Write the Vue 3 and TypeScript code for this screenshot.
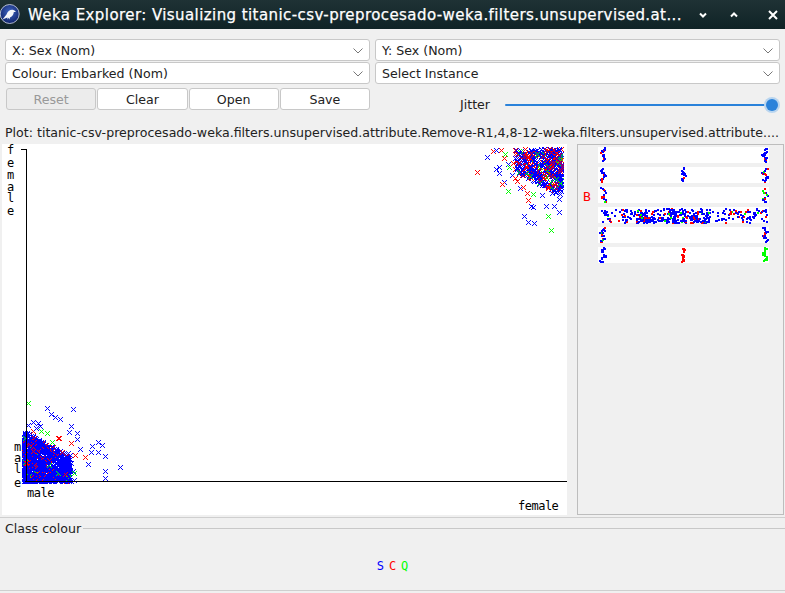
<script setup lang="ts">
import { computed } from "vue";

type Pt = { x: number; y: number; c: string };

const BLUE = "#0000ff";
const RED = "#ff0000";
const GREEN = "#00ff00";

let seed = 20231;
function rnd() {
  seed = (seed * 16807) % 2147483647;
  return seed / 2147483647;
}

function pick(b: number, r: number) {
  const v = rnd();
  return v < b ? BLUE : v < b + r ? RED : GREEN;
}

// stray points read off the reference
const strays: [number, number, string][] = [
  [28, 403, GREEN], [47, 408, BLUE], [51, 414, BLUE], [55, 417, BLUE], [60, 419, BLUE],
  [73, 409, BLUE], [71, 426, BLUE], [69, 432, BLUE], [77, 433, BLUE], [77, 439, BLUE],
  [92, 446, BLUE], [98, 442, BLUE], [102, 445, BLUE], [91, 452, BLUE], [98, 452, BLUE],
  [105, 456, BLUE], [105, 471, BLUE], [105, 478, BLUE], [120, 467, BLUE], [85, 457, RED],
  [88, 464, BLUE], [80, 449, BLUE], [75, 455, RED], [71, 443, RED], [33, 431, RED],
  [41, 431, GREEN], [47, 433, GREEN], [58, 438, RED], [59, 438, RED], [52, 442, GREEN],
  [28, 425, BLUE], [33, 422, BLUE], [38, 423, BLUE], [40, 426, BLUE], [36, 428, BLUE],
  [487, 157, BLUE], [477, 172, RED], [493, 151, RED], [496, 150, BLUE], [501, 150, RED],
  [505, 154, GREEN], [504, 158, RED], [496, 169, BLUE], [499, 167, BLUE], [499, 173, BLUE],
  [508, 164, BLUE], [509, 167, GREEN], [513, 163, RED], [504, 182, BLUE], [502, 184, RED],
  [508, 191, GREEN], [512, 175, BLUE], [515, 178, RED], [517, 181, RED], [522, 173, BLUE],
  [520, 188, BLUE], [523, 187, RED], [527, 193, RED], [533, 194, GREEN], [528, 200, RED],
  [531, 206, BLUE], [533, 207, BLUE], [524, 216, BLUE], [528, 222, BLUE], [534, 223, BLUE],
  [548, 216, GREEN], [551, 230, GREEN], [546, 206, BLUE], [554, 206, BLUE], [559, 212, BLUE],
  [559, 199, BLUE], [552, 193, BLUE], [542, 195, BLUE],
];

function makePoints() {
  const pts: Pt[] = [];
  // male cloud, thinning towards the upper right
  for (let i = 0; i < 1000; i++) {
    const u = Math.pow(rnd(), 1.5) * 46;
    const limit = 50 - u * 0.55;
    pts.push({
      x: 24 + Math.round(u),
      y: 481 - Math.round(Math.pow(rnd(), 1.3) * limit),
      c: pick(0.9, 0.08),
    });
  }
  for (let i = 0; i < 30; i++) {
    pts.push({
      x: 26 + Math.round(rnd() * 50),
      y: 481 - Math.round(rnd() * 36),
      c: pick(0.85, 0.11),
    });
  }
  // female cloud, thinning towards the lower left
  for (let i = 0; i < 430; i++) {
    const u = Math.pow(rnd(), 1.4) * 46;
    const limit = 46 - u * 0.5;
    pts.push({
      x: 561 - Math.round(u),
      y: 149 + Math.round(Math.pow(rnd(), 1.2) * limit),
      c: pick(0.66, 0.27),
    });
  }
  for (const [x, y, c] of strays) pts.push({ x, y, c });
  return pts;
}

function crossPath(x: number, y: number) {
  let d = "";
  for (let i = -2; i <= 2; i++) {
    d += `M${x + i} ${y + i}h1v1h-1z`;
    if (i !== 0) d += `M${x + i} ${y - i}h1v1h-1z`;
  }
  return d;
}

const crosses = computed(() =>
  makePoints().map((p) => ({ d: crossPath(p.x, p.y), c: p.c }))
);

const yLetters = [
  { ch: "f", x: 7, y: 154 },
  { ch: "e", x: 7, y: 167 },
  { ch: "m", x: 7, y: 179 },
  { ch: "a", x: 7, y: 191 },
  { ch: "l", x: 7, y: 202 },
  { ch: "e", x: 7, y: 215 },
  { ch: "m", x: 14, y: 451 },
  { ch: "a", x: 14, y: 462 },
  { ch: "l", x: 14, y: 473 },
  { ch: "e", x: 14, y: 487 },
];

// small panel on the right: six strips, dots per column cluster
const stripTops = [147, 167, 187, 207, 227, 247];

function cluster(top: number, cx: number, n: number, b: number, r: number) {
  const out: { x: number; y: number; c: string }[] = [];
  for (let i = 0; i < n; i++) {
    const y = top + Math.round(rnd() * 14);
    const wobble = Math.sin(y * 0.7 + cx) * 1.5;
    out.push({ x: Math.round(cx + wobble + rnd() * 3 - 1.5), y, c: pick(b, r) });
  }
  return out;
}

const dots = computed(() => {
  const out: { x: number; y: number; c: string }[] = [];
  out.push(...cluster(147, 602, 24, 0.7, 0.3));
  out.push(...cluster(147, 764, 24, 0.75, 0.17));
  out.push(...cluster(167, 602, 22, 0.6, 0.4));
  out.push(...cluster(167, 683, 18, 0.95, 0.05));
  out.push(...cluster(167, 764, 22, 0.6, 0.34));
  out.push(...cluster(187, 603, 16, 0.6, 0.3));
  out.push(...cluster(187, 764, 16, 0.6, 0.22));
  for (let i = 0; i < 230; i++) {
    out.push({
      x: 600 + Math.round(rnd() * 166),
      y: 208 + Math.round(rnd() * 14),
      c: pick(0.78, 0.17),
    });
  }
  for (let i = 0; i < 200; i++) {
    out.push({
      x: 636 + Math.round(Math.pow(rnd(), 1.2) * 72),
      y: 208 + Math.round(Math.pow(rnd(), 0.6) * 14),
      c: pick(0.86, 0.1),
    });
  }
  out.push(...cluster(227, 602, 22, 0.75, 0.18));
  out.push(...cluster(227, 764, 24, 0.7, 0.28));
  out.push(...cluster(247, 602, 24, 1, 0));
  out.push(...cluster(247, 682, 20, 0, 1));
  out.push(...cluster(247, 764, 22, 0, 0));
  return out;
});
</script>

<template>
  <div class="win">
    <header class="titlebar">
      <svg class="logo" width="20" height="20" viewBox="0 0 20 20">
        <defs>
          <radialGradient id="orb" cx="0.5" cy="0.4" r="0.6">
            <stop offset="0" stop-color="#3f66c4" />
            <stop offset="1" stop-color="#10246b" />
          </radialGradient>
        </defs>
        <circle cx="9.7" cy="10" r="9.5" fill="url(#orb)" stroke="#d5dcec" stroke-width="0.8" />
        <path d="M2.5 15.5 L6.5 10.5 C7.5 7.5 10 5.6 12.5 5.8 C14 5.9 15 6.8 15.8 8 L13.8 8 C13.6 10.5 12.5 12.6 10 13.5 L9.4 15.6 L8.6 13.8 L7.6 15.6 L7.4 13.6 Z" fill="#f4f6fa" />
      </svg>
      <span class="title">Weka Explorer: Visualizing titanic-csv-preprocesado-weka.filters.unsupervised.at...</span>
      <div class="wm">
        <svg width="10" height="10" viewBox="0 0 10 10"><path d="M2 3.5 L5 6.5 L8 3.5" fill="none" stroke="#fff" stroke-width="2" /></svg>
        <svg width="10" height="10" viewBox="0 0 10 10"><path d="M2 6.5 L5 3.5 L8 6.5" fill="none" stroke="#fff" stroke-width="2" /></svg>
        <svg class="wm-close" width="10" height="10" viewBox="0 0 10 10"><path d="M1 1 L9 9 M9 1 L1 9" fill="none" stroke="#fff" stroke-width="2" /></svg>
      </div>
    </header>

    <section class="controls">
      <div class="combo"><span>X: Sex (Nom)</span><svg width="10" height="6" viewBox="0 0 10 6"><path d="M0.5 0.5 L5 5 L9.5 0.5" fill="none" stroke="#777" /></svg></div>
      <div class="combo"><span>Y: Sex (Nom)</span><svg width="10" height="6" viewBox="0 0 10 6"><path d="M0.5 0.5 L5 5 L9.5 0.5" fill="none" stroke="#777" /></svg></div>
      <div class="combo"><span>Colour: Embarked (Nom)</span><svg width="10" height="6" viewBox="0 0 10 6"><path d="M0.5 0.5 L5 5 L9.5 0.5" fill="none" stroke="#777" /></svg></div>
      <div class="combo"><span>Select Instance</span><svg width="10" height="6" viewBox="0 0 10 6"><path d="M0.5 0.5 L5 5 L9.5 0.5" fill="none" stroke="#777" /></svg></div>
    </section>

    <section class="actions">
      <div class="buttons">
        <button type="button" class="btn" disabled>Reset</button>
        <button type="button" class="btn">Clear</button>
        <button type="button" class="btn">Open</button>
        <button type="button" class="btn">Save</button>
      </div>
      <span class="jitter-label">Jitter</span>
      <div class="slider"><div class="thumb"></div></div>
    </section>

    <div class="plot-label">Plot: titanic-csv-preprocesado-weka.filters.unsupervised.attribute.Remove-R1,4,8-12-weka.filters.unsupervised.attribute....</div>

    <section class="plot-row">
      <svg class="plot" width="565" height="371" viewBox="2 144 565 371" shape-rendering="crispEdges">
        <rect x="2" y="144" width="565" height="371" fill="#fff" />
        <path v-for="(p, i) in crosses" :key="i" :d="p.d" :fill="p.c" />
        <rect x="26" y="149" width="1" height="333" fill="#000" />
        <rect x="21" y="149" width="5" height="1" fill="#000" />
        <rect x="25" y="481" width="542" height="1" fill="#000" />
        <text v-for="(l, i) in yLetters" :key="'l' + i" class="axis" :x="l.x" :y="l.y">{{ l.ch }}</text>
        <text class="axis" x="27" y="497">male</text>
        <text class="axis" x="518" y="510">female</text>
      </svg>
      <div class="side">
        <svg width="205" height="369" viewBox="578 145 205 369" shape-rendering="crispEdges">
          <rect v-for="t in stripTops" :key="t" x="598" :y="t" width="171" height="16" fill="#fff" />
          <rect v-for="(d, i) in dots" :key="i" :x="d.x" :y="d.y" width="2" height="2" :fill="d.c" />
          <text class="side-b" x="583" y="201">B</text>
        </svg>
      </div>
    </section>

    <section class="legend">
      <div class="legend-head"><span>Class colour</span><i></i></div>
      <div class="legend-keys">
        <span class="k-s">S</span><span class="k-c">C</span><span class="k-q">Q</span>
      </div>
    </section>
  </div>
</template>

<style>
html,
body {
  margin: 0;
  background: #f0f0f0;
}
</style>

<style scoped>
.win {
  width: 785px;
  height: 593px;
  overflow: hidden;
  background: #f0f0f0;
  display: flex;
  flex-direction: column;
  font-family: "DejaVu Sans", sans-serif;
  font-size: 12.6px;
  color: #222;
}
.titlebar {
  height: 29px;
  flex: none;
  display: flex;
  align-items: center;
  background: linear-gradient(#1f3235, #0f2326);
  color: #fff;
}
.logo {
  flex: none;
  margin-top: -1px;
}
.title {
  margin-left: 8px;
  width: 660px;
  flex: none;
  font-size: 15px;
  letter-spacing: 0.42px;
  -webkit-text-stroke: 0.25px #fff;
  white-space: nowrap;
  overflow: hidden;
}
.wm {
  display: flex;
  gap: 21px;
  margin-left: 10px;
}
.wm-close {
  margin-left: 8px;
}
.controls {
  margin: 10px 5px 0 5px;
  display: grid;
  grid-template-columns: 365px 405px;
  grid-auto-rows: 22px;
  column-gap: 5px;
  row-gap: 1px;
}
.combo {
  background: #fff;
  border: 1px solid #c8c8c8;
  border-radius: 3px;
  display: flex;
  align-items: center;
  justify-content: space-between;
  padding: 1px 6px 0 6px;
  box-sizing: border-box;
}
.actions {
  display: flex;
  align-items: flex-start;
  margin: 4px 5px 0 6px;
  height: 23px;
}
.buttons {
  width: 364px;
  flex: none;
  display: grid;
  grid-template-columns: repeat(4, 1fr);
  gap: 1px;
}
.btn {
  height: 22px;
  background: #fff;
  border: 1px solid #c8c8c8;
  border-radius: 3px;
  font: inherit;
  color: #222;
  padding: 0;
}
.btn:disabled {
  background: #ececec;
  color: #999;
}
.jitter-label {
  margin-left: 90px;
  width: 45px;
  flex: none;
  margin-top: 10px;
  line-height: 14px;
}
.slider {
  position: relative;
  margin-top: 16px;
  width: 267px;
  height: 2px;
  background: #2a82da;
  border-radius: 1px;
}
.thumb {
  position: absolute;
  right: -6px;
  top: -5px;
  width: 12px;
  height: 12px;
  border-radius: 50%;
  background: #2a82da;
  box-shadow: 0 0 0 2px #b9d5ef;
}
.plot-label {
  margin: 15px 0 0 5px;
  height: 14px;
  line-height: 14px;
  white-space: nowrap;
}
.plot-row {
  margin-top: 4px;
  height: 371px;
  flex: none;
  display: flex;
  align-items: flex-start;
}
.plot {
  display: block;
  margin-left: 2px;
  flex: none;
}
.side {
  margin-left: 10px;
  width: 207px;
  height: 371px;
  box-sizing: border-box;
  border: 1px solid #bdbdbd;
  flex: none;
}
.side svg {
  display: block;
}
.axis {
  font-family: "DejaVu Sans Mono", monospace;
  font-size: 12px;
  letter-spacing: -0.5px;
  fill: #000;
}
.side-b {
  font-family: "DejaVu Sans Mono", monospace;
  font-size: 13px;
  fill: #ff0000;
}
.legend {
  margin-top: 2px;
  height: 74px;
  flex: none;
  border-top: 1px solid #cfcfcf;
  border-bottom: 1px solid #cfcfcf;
  box-sizing: border-box;
}
.legend-head {
  display: flex;
  align-items: center;
  gap: 2px;
  margin: 3px 0 0 5px;
  height: 14px;
}
.legend-head i {
  flex: 1;
  height: 1px;
  background: #c8c8c8;
}
.legend-keys {
  display: flex;
  justify-content: center;
  gap: 5px;
  margin-top: 24px;
  font-family: "DejaVu Sans Mono", monospace;
  font-size: 12px;
  line-height: 14px;
}
.k-s {
  color: #0000ff;
}
.k-c {
  color: #ff0000;
}
.k-q {
  color: #00ff00;
}
</style>
